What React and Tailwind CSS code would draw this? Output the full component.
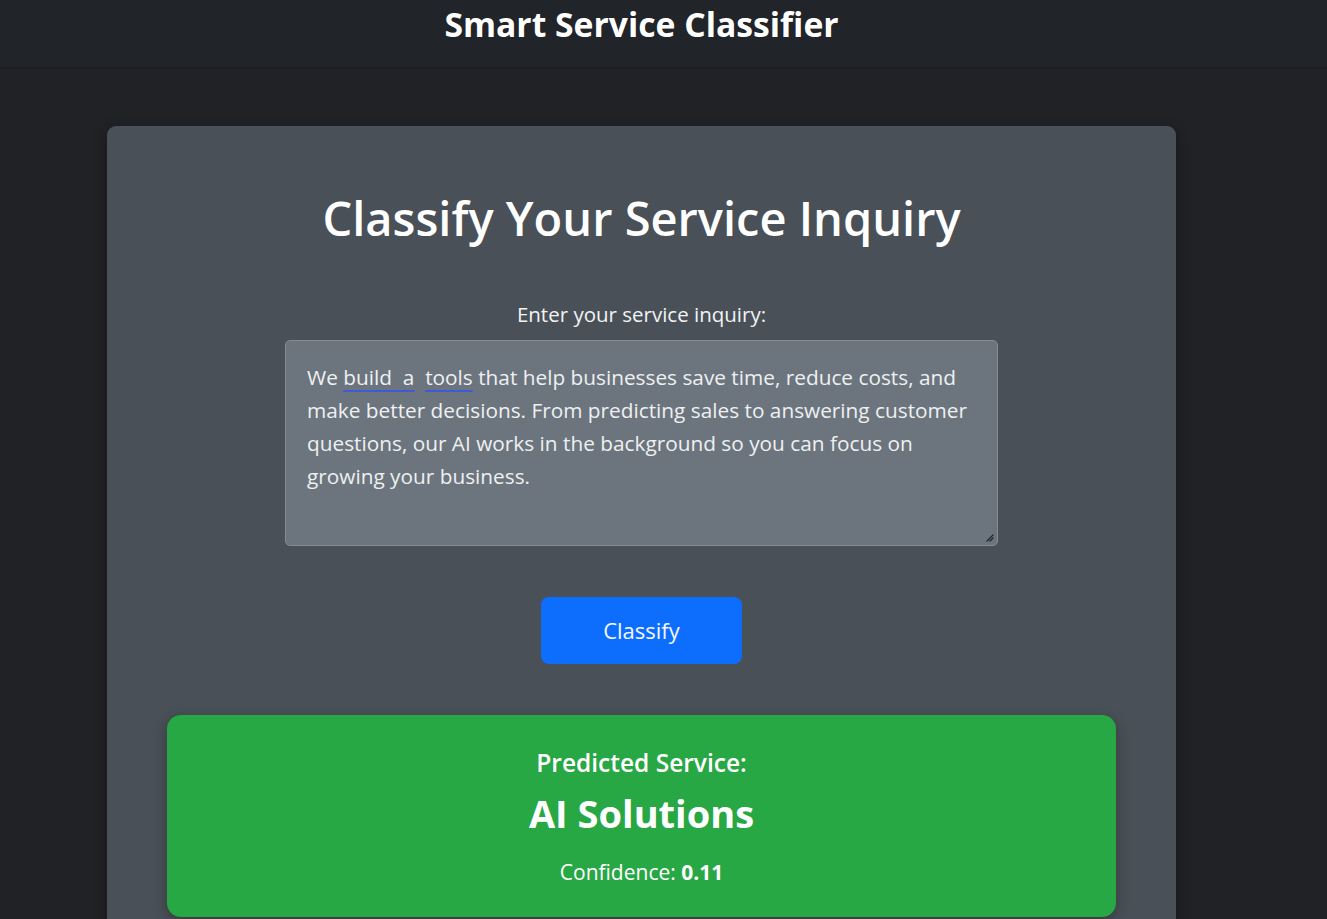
const INQUIRY_LINES = [
  'make better decisions. From predicting sales to answering customer',
  'questions, our AI works in the background so you can focus on',
  'growing your business.',
]

function ResizeGrip() {
  return (
    <svg width="10" height="10" viewBox="0 0 10 10" className="absolute right-[3px] bottom-[3px]">
      <path d="M9 3 3 9M9 6 6 9" stroke="#1f2226" strokeWidth="1.2" strokeLinecap="round" />
    </svg>
  )
}

function Squiggle({ children }) {
  return (
    <span className="underline decoration-[#3d5bd9] decoration-2 underline-offset-[5px]">{children}</span>
  )
}

export default function App() {
  return (
    <div className="min-h-screen bg-[#202226] text-white font-['Open_Sans',sans-serif]">
      <header className="h-[67px] bg-[#212429] shadow-[0_1px_2px_rgba(0,0,0,0.15)]">
        <div className="w-[1283px] flex justify-center">
          <h2 className="text-[33.7px] leading-[48px] font-bold">Smart Service Classifier</h2>
        </div>
      </header>

      <main className="w-[1283px] pt-[59px] px-[107px]">
        <div className="bg-[#495057] rounded-[9px] shadow-[0_4px_14px_rgba(0,0,0,0.35)] px-[60px] pt-[60px] pb-[40px] flex flex-col items-center">
          <h1 className="text-[47px] leading-[64px] font-semibold">Classify Your Service Inquiry</h1>

          <label className="mt-[49px] text-[20.5px] leading-[30px] text-[#f1f3f5]">Enter your service inquiry:</label>

          <div className="relative mt-[11px] w-[713px] h-[206px] bg-[#6c757d] border border-[#858b91] rounded-[5px] px-[21px] pt-[20px] text-[20.8px] leading-[33px] text-[#eef0f2] whitespace-nowrap">
            <div>
              We <Squiggle>build&nbsp; a</Squiggle>&nbsp; <Squiggle>tools</Squiggle> that help businesses save time, reduce costs, and
            </div>
            {INQUIRY_LINES.map(line => (
              <div key={line}>{line}</div>
            ))}
            <ResizeGrip />
          </div>

          <button
            type="button"
            className="mt-[51px] w-[201px] h-[67px] rounded-[8px] bg-[#0d6efd] text-[22px] text-[#f4f7ff]"
          >
            Classify
          </button>

          <div className="mt-[51px] w-full bg-[#28a745] rounded-[14px] shadow-[0_4px_14px_rgba(0,0,0,0.3)] pt-[30px] pb-[30px] flex flex-col items-center">
            <p className="text-[24.5px] leading-[36px] font-semibold">Predicted Service:</p>
            <p className="mt-[8px] text-[38px] leading-[48px] font-bold">AI Solutions</p>
            <p className="mt-[20px] text-[21px] leading-[30px]">
              Confidence: <span className="font-bold">0.11</span>
            </p>
          </div>
        </div>
      </main>
    </div>
  )
}
